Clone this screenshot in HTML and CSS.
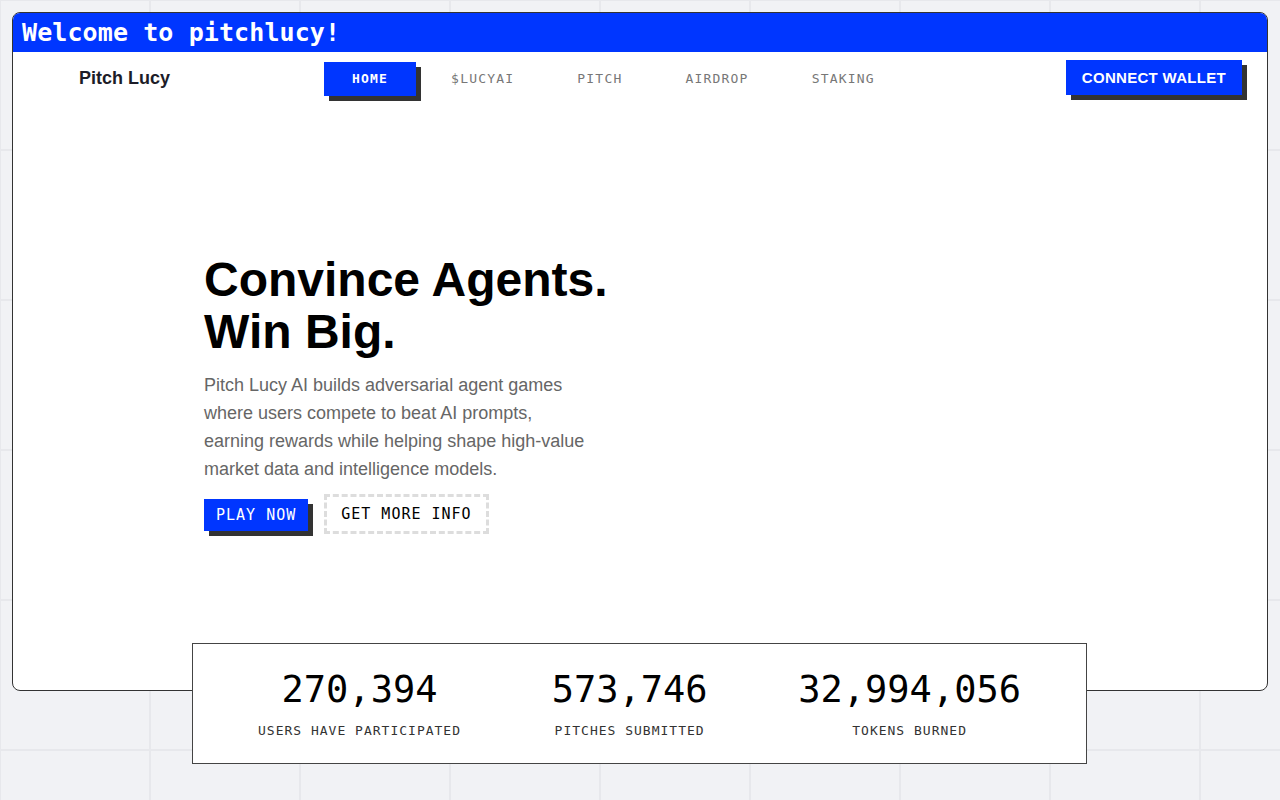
FILE: index.html
```html
<!DOCTYPE html>
<html>
<head>
    <title>Pitch Lucy</title>
    <link rel="stylesheet" href="styles.css">
</head>
<body>
    <div class="window">
        <div class="titlebar">Welcome to pitchlucy!</div>

        <nav class="nav">
            <a class="logo" href="#">Pitch Lucy</a>
            <ul class="links">
                <li class="active">HOME</li>
                <li>$LUCYAI</li>
                <li>PITCH</li>
                <li>AIRDROP</li>
                <li>STAKING</li>
            </ul>
            <button class="wallet">CONNECT WALLET</button>
        </nav>

        <section class="hero">
            <div class="hero-text">
                <h1>Convince Agents.<br>Win Big.</h1>
                <p>Pitch Lucy AI builds adversarial agent games where users compete to beat AI prompts, earning rewards while helping shape high-value market data and intelligence models.</p>
                <div class="actions">
                    <button class="btn-play">PLAY NOW</button>
                    <button class="btn-info">GET MORE INFO</button>
                </div>
            </div>
        </section>
    </div>

    <div class="stats">
        <div class="stat">
            <div class="stat-num">270,394</div>
            <div class="stat-label">USERS HAVE PARTICIPATED</div>
        </div>
        <div class="stat">
            <div class="stat-num">573,746</div>
            <div class="stat-label">PITCHES SUBMITTED</div>
        </div>
        <div class="stat">
            <div class="stat-num">32,994,056</div>
            <div class="stat-label">TOKENS BURNED</div>
        </div>
    </div>
</body>
</html>
```

FILE: styles.css
```css
body {
    margin: 0;
    padding: 12px;
    font-family: "Liberation Sans", Arial, sans-serif;
    background-color: #f1f2f5;
    background-image:
        linear-gradient(to right, #e7e8ec 2px, transparent 2px),
        linear-gradient(to bottom, #e7e8ec 2px, transparent 2px);
    background-size: 150px 150px;
    background-position: -1px -1px;
    height: 800px;
    box-sizing: border-box;
    overflow: hidden;
}

.window {
    height: 679px;
    box-sizing: border-box;
    background: #fff;
    border: 1px solid #333;
    border-radius: 8px;
    overflow: hidden;
    display: flex;
    flex-direction: column;
}

.titlebar {
    background: #0036ff;
    color: #fff;
    height: 39px;
    line-height: 39px;
    padding-left: 9px;
    font-family: "DejaVu Sans Mono", monospace;
    font-weight: bold;
    font-size: 25px;
    letter-spacing: 0.1px;
}

.nav {
    display: flex;
    align-items: flex-start;
    height: 46px;
    padding: 8px 20px 0 66px;
    box-sizing: border-box;
}

.logo {
    width: 245px;
    margin-top: 8px;
    font-size: 18px;
    font-weight: bold;
    color: #1c1c28;
    text-decoration: none;
}

.links {
    display: flex;
    gap: 7px;
    list-style: none;
    margin: 2px 0 0;
    padding: 0;
}

.links li {
    height: 34px;
    line-height: 34px;
    padding: 0 28px;
    font-family: "DejaVu Sans Mono", monospace;
    font-size: 13px;
    letter-spacing: 1.2px;
    color: #777;
}

.links li.active {
    background: #0036ff;
    color: #fff;
    font-weight: bold;
    box-shadow: 5px 5px 0 #333;
}

.wallet {
    margin-left: auto;
    height: 35px;
    padding: 0 16px;
    border: none;
    background: #0036ff;
    color: #fff;
    font-family: "Liberation Sans", Arial, sans-serif;
    font-weight: bold;
    font-size: 15px;
    letter-spacing: 0.3px;
    box-shadow: 5px 5px 0 #333;
    margin-right: 5px;
}

.hero {
    flex: 1;
    display: flex;
    align-items: center;
    padding-left: 191px;
}

.hero h1 {
    margin: 0;
    font-size: 48px;
    line-height: 52px;
    color: #000;
}

.hero p {
    margin: 13px 0 0;
    max-width: 390px;
    font-size: 18px;
    line-height: 28px;
    color: #666;
}

.actions {
    display: flex;
    align-items: center;
    gap: 16px;
    margin-top: 11px;
    height: 40px;
}

.btn-play {
    height: 32px;
    padding: 0 12px;
    border: none;
    background: #0036ff;
    color: #fff;
    font-family: "DejaVu Sans Mono", monospace;
    font-size: 15px;
    letter-spacing: 1px;
    box-shadow: 5px 5px 0 #333;
    margin-top: 2px;
}

.btn-info {
    height: 40px;
    padding: 0 14px;
    border: 3px dashed #ddd;
    background: #fff;
    color: #000;
    font-family: "DejaVu Sans Mono", monospace;
    font-size: 15px;
    letter-spacing: 1px;
}

.stats {
    position: relative;
    width: 895px;
    height: 121px;
    box-sizing: border-box;
    margin: -48px 0 0 180px;
    background: #fff;
    border: 1px solid #444;
    display: flex;
    justify-content: space-between;
    padding: 0 65px;
}

.stat {
    text-align: center;
    padding-top: 25px;
}

.stat-num {
    font-family: "DejaVu Sans Mono", monospace;
    font-size: 37px;
    line-height: 42px;
    color: #000;
}

.stat-label {
    margin-top: 12px;
    font-family: "DejaVu Sans Mono", monospace;
    font-size: 13px;
    letter-spacing: 1px;
    color: #333;
}
```
